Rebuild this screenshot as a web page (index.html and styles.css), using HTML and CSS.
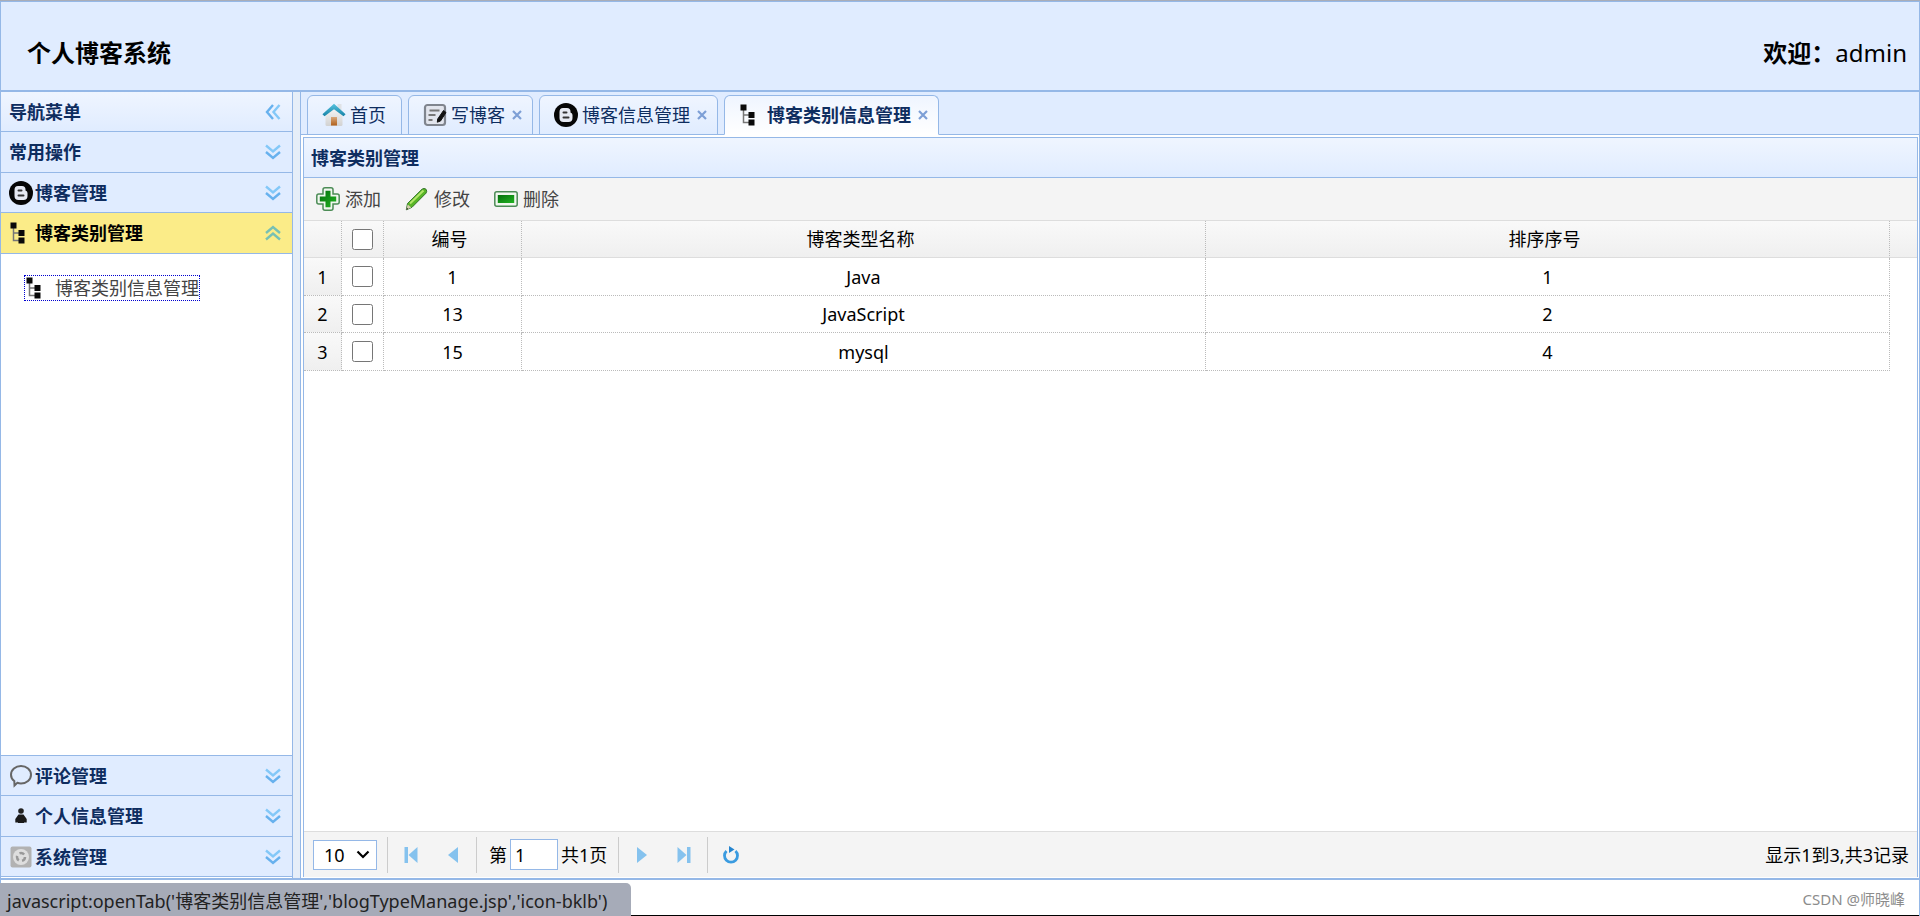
FILE: index.html
```html
<!DOCTYPE html>
<html lang="zh-CN">
<head>
<meta charset="utf-8">
<title>个人博客系统</title>
<link rel="stylesheet" href="styles.css">
</head>
<body>
<svg class="defs" aria-hidden="true">
  <defs>
    <linearGradient id="green" x1="0" y1="0" x2="1" y2="1"><stop offset="0" stop-color="#046f0c"/><stop offset="1" stop-color="#22b422"/></linearGradient>
    <linearGradient id="wall" x1="0" y1="0" x2="0" y2="1"><stop offset="0" stop-color="#f6f6f6"/><stop offset="1" stop-color="#d2d2d2"/></linearGradient>
    <linearGradient id="door" x1="0" y1="0" x2="0" y2="1"><stop offset="0" stop-color="#d9a87c"/><stop offset="1" stop-color="#b0601c"/></linearGradient>
    <linearGradient id="roof" x1="0" y1="0" x2="0" y2="1"><stop offset="0" stop-color="#57c2de"/><stop offset="1" stop-color="#1683a8"/></linearGradient>
    <symbol id="i-tree" viewBox="0 0 24 24"><path d="M4.500 5v14.500H10M4.500 12H10" fill="none" stroke="#777" stroke-width="1.500"/><path d="M1.500 1.500h6v6h-6zM9.500 9h6v6h-6zM9.500 16.500h6v6h-6z" fill="#0a0a0a"/></symbol>
    <symbol id="i-blog" viewBox="0 0 24 24"><circle cx="12" cy="12" r="12" fill="#060606"/><path d="M9 5h4q3.500 0 3.500 3.500v1q2 .5 2 2.500v3q0 4-4 4h-5q-4 0-4-4V9q0-4 3.500-4z" fill="#e6e9f2"/><path d="M9.500 9.500h3M9.500 14.500h5" stroke="#333" stroke-width="2" stroke-linecap="round"/></symbol>
    <symbol id="i-chat" viewBox="0 0 24 24"><path d="M12 2c5.500 0 10 3.800 10 8.700s-4.500 8.700-10 8.700c-1.400 0-2.600-.2-3.700-.6L5.500 21.500l-.2-4.500C3.200 15.500 2 13.200 2 10.700 2 5.800 6.500 2 12 2z" fill="none" stroke="#666" stroke-width="2"/></symbol>
    <symbol id="i-person" viewBox="0 0 24 24"><circle cx="12" cy="7" r="2.800" fill="#222"/><path d="M9.500 10.500h5l3.200 4.500v3.500H15v.5H9v-.5H6.300V15z" fill="#1a1a1a"/></symbol>
    <symbol id="i-gear" viewBox="0 0 24 24"><rect x="1.500" y="1.500" width="21" height="21" rx="2" fill="#b2b2b2"/><circle cx="12" cy="12" r="8" fill="#dedede"/><circle cx="12" cy="12" r="4" fill="none" stroke="#999" stroke-width="2.500" stroke-dasharray="5 3.400"/></symbol>
    <symbol id="i-write" viewBox="0 0 24 24"><rect x="2" y="2" width="20" height="20" rx="2.500" fill="#e2e5ed" stroke="#80858e" stroke-width="2.200"/><path d="M6.500 7.500h10M5.500 12h7M5.500 17h4" stroke="#777" stroke-width="1.800"/><path d="M20.500 7.500l2.500 2-5.500 8.500-3.200 1.200.4-3.200z" fill="#111" stroke="#111"/></symbol>
    <symbol id="i-home" viewBox="0 0 24 24"><path d="M15.500 1h4v7l-4-3z" fill="#dfe2e6"/><path d="M3.500 12L12 5l8.500 7v9.500q0 1.500-1.500 1.500H5q-1.500 0-1.500-1.500z" fill="url(#wall)"/><path d="M9 14h6v8.500H9z" fill="url(#door)"/><path d="M12 .8L23.600 11.300 21.500 13.200 12 6.200 2.500 13.200.4 11.300z" fill="url(#roof)"/></symbol>
    <symbol id="i-add" viewBox="0 0 24 24"><path d="M9 .8h6q2 0 2 2V7h4.200q2 0 2 2v6q0 2-2 2H17v4.200q0 2-2 2H9q-2 0-2-2V17H2.800q-2 0-2-2V9q0-2 2-2H7V2.800q0-2 2-2z" fill="#f1f7ef" stroke="#4c8c56" stroke-width="1.500"/><path d="M9.500 3.800h5v5.700h5.700v5h-5.700v5.700h-5v-5.700H3.800v-5h5.700z" fill="url(#green)"/></symbol>
    <symbol id="i-edit" viewBox="0 0 24 24"><path d="M2.500 16.500L17 2.200q2-1.500 4 0 1.500 2 0 4L7 20.300 1.300 22.800z" fill="#58b526" stroke="#35762c" stroke-width="1"/><path d="M5 16.500L18.500 3.500" stroke="#b2e66a" stroke-width="2"/><path d="M2.700 17.500l3.600 3-5 2.300z" fill="#d6ccb0"/><path d="M1.300 22.800l.8-2 1.200 1.200z" fill="#222"/></symbol>
    <symbol id="i-remove" viewBox="0 0 24 24"><rect x=".8" y="4.800" width="22.400" height="14.400" rx="2" fill="#f1f7ef" stroke="#4c8c56" stroke-width="1.500"/><rect x="3.800" y="8" width="16.400" height="8" fill="url(#green)"/></symbol>
    <symbol id="i-down" viewBox="0 0 16 16"><path d="M1 1.500l7 6 7-6" fill="none" stroke="#83c8f8" stroke-width="2.400"/><path d="M1 8l7 6 7-6" fill="none" stroke="#67b1ee" stroke-width="2.400"/></symbol>
    <symbol id="i-up" viewBox="0 0 16 16"><path d="M1 8l7-6 7 6M1 14.500l7-6 7 6" fill="none" stroke="#77c0b4" stroke-width="2.400"/></symbol>
    <symbol id="i-left" viewBox="0 0 16 16"><path d="M8 1L2 8l6 7" fill="none" stroke="#67b1ee" stroke-width="2.400"/><path d="M14.500 1l-6 7 6 7" fill="none" stroke="#83c8f8" stroke-width="2.400"/></symbol>
    <symbol id="i-x" viewBox="0 0 10 10"><path d="M1 1l8 8M9 1L1 9" stroke="#7d9fd6" stroke-width="2.200"/></symbol>
    <symbol id="i-first" viewBox="0 0 16 16"><path d="M1.500 0H5v16H1.500zM14.500 0v16L5.500 8z" fill="#85c2ee"/></symbol>
    <symbol id="i-prev" viewBox="0 0 16 16"><path d="M13 0v16L3 8z" fill="#85c2ee"/></symbol>
    <symbol id="i-next" viewBox="0 0 16 16"><path d="M3 0v16l10-8z" fill="#85c2ee"/></symbol>
    <symbol id="i-last" viewBox="0 0 16 16"><path d="M14.500 0H11v16h3.500zM1.500 0v16l9-8z" fill="#85c2ee"/></symbol>
    <symbol id="i-reload" viewBox="0 0 16 18"><path d="M3.500 5A6.500 6.500 0 1 0 12.500 5" fill="none" stroke="#3a9be0" stroke-width="2.800"/><path d="M6 0l5.500 3.500L6 7z" fill="#2585cf"/></symbol>
    <symbol id="i-caret" viewBox="0 0 14 9"><path d="M1.500 1.500l5.500 5.500 5.500-5.500" fill="none" stroke="#000" stroke-width="2.200"/></symbol>
  </defs>
</svg>

<header class="banner">
  <h1 class="banner-title">个人博客系统</h1>
  <p class="banner-user"><strong>欢迎：</strong>admin</p>
</header>

<div class="workspace">
  <nav class="sidebar" aria-label="导航菜单">
    <div class="nav-title"><span>导航菜单</span><button class="tool" aria-label="收起"><svg><use href="#i-left"/></svg></button></div>
    <button class="nav-item"><span class="nav-label">常用操作</span><svg class="chev"><use href="#i-down"/></svg></button>
    <button class="nav-item"><svg class="icon"><use href="#i-blog"/></svg><span class="nav-label">博客管理</span><svg class="chev"><use href="#i-down"/></svg></button>
    <button class="nav-item selected"><svg class="icon"><use href="#i-tree"/></svg><span class="nav-label">博客类别管理</span><svg class="chev"><use href="#i-up"/></svg></button>
    <div class="nav-body"><a class="nav-link" href="#"><svg class="icon"><use href="#i-tree"/></svg>博客类别信息管理</a></div>
    <button class="nav-item"><svg class="icon"><use href="#i-chat"/></svg><span class="nav-label">评论管理</span><svg class="chev"><use href="#i-down"/></svg></button>
    <button class="nav-item"><svg class="icon"><use href="#i-person"/></svg><span class="nav-label">个人信息管理</span><svg class="chev"><use href="#i-down"/></svg></button>
    <button class="nav-item"><svg class="icon"><use href="#i-gear"/></svg><span class="nav-label">系统管理</span><svg class="chev"><use href="#i-down"/></svg></button>
  </nav>

  <main class="center">
    <div class="tabs">
      <div class="tab"><svg class="icon"><use href="#i-home"/></svg><span>首页</span></div>
      <div class="tab closable"><svg class="icon"><use href="#i-write"/></svg><span>写博客</span><button class="close" aria-label="关闭"><svg><use href="#i-x"/></svg></button></div>
      <div class="tab closable"><svg class="icon"><use href="#i-blog"/></svg><span>博客信息管理</span><button class="close" aria-label="关闭"><svg><use href="#i-x"/></svg></button></div>
      <div class="tab closable active"><svg class="icon"><use href="#i-tree"/></svg><span>博客类别信息管理</span><button class="close" aria-label="关闭"><svg><use href="#i-x"/></svg></button></div>
    </div>
    <section class="panel">
      <h2 class="panel-title">博客类别管理</h2>
      <div class="toolbar">
        <button class="action"><svg class="icon"><use href="#i-add"/></svg>添加</button>
        <button class="action"><svg class="icon"><use href="#i-edit"/></svg>修改</button>
        <button class="action"><svg class="icon"><use href="#i-remove"/></svg>删除</button>
      </div>
      <div class="grid-wrap">
        <table class="grid">
          <colgroup><col class="c-row"><col class="c-check"><col class="c-id"><col><col><col class="c-gap"></colgroup>
          <thead>
            <tr><th></th><th><input type="checkbox" aria-label="全选"></th><th class="sortable">编号</th><th class="sortable">博客类型名称</th><th class="sortable">排序序号</th><th></th></tr>
          </thead>
          <tbody>
            <tr><td class="num">1</td><td><input type="checkbox" aria-label="选择 1"></td><td>1</td><td>Java</td><td>1</td><td class="gap"></td></tr>
            <tr><td class="num">2</td><td><input type="checkbox" aria-label="选择 2"></td><td>13</td><td>JavaScript</td><td>2</td><td class="gap"></td></tr>
            <tr><td class="num">3</td><td><input type="checkbox" aria-label="选择 3"></td><td>15</td><td>mysql</td><td>4</td><td class="gap"></td></tr>
          </tbody>
        </table>
      </div>
      <div class="pager">
        <span class="page-size"><select aria-label="每页条数"><option>10</option><option>20</option><option>50</option></select><svg class="caret"><use href="#i-caret"/></svg></span>
        <span class="sep"></span>
        <button class="page-btn" aria-label="首页"><svg><use href="#i-first"/></svg></button>
        <button class="page-btn" aria-label="上一页"><svg><use href="#i-prev"/></svg></button>
        <span class="sep"></span>
        <label class="page-label">第<input class="page-num" type="text" value="1">共1页</label>
        <span class="sep"></span>
        <button class="page-btn" aria-label="下一页"><svg><use href="#i-next"/></svg></button>
        <button class="page-btn" aria-label="末页"><svg><use href="#i-last"/></svg></button>
        <span class="sep"></span>
        <button class="page-btn" aria-label="刷新"><svg class="reload"><use href="#i-reload"/></svg></button>
        <span class="page-info">显示1到3,共3记录</span>
      </div>
    </section>
  </main>
</div>

<footer class="footer">CSDN @师晓峰</footer>
<div class="status">javascript:openTab('博客类别信息管理','blogTypeManage.jsp','icon-bklb')</div>
</body>
</html>
```
FILE: styles.css
```css
* { box-sizing: border-box; }

body {
  margin: 0;
  height: 100vh;
  display: flex;
  flex-direction: column;
  position: relative;
  border-top: 1px solid #a9adb8;
  background: #fff;
  color: #000;
  font: 18px/26px "Noto Sans", "Noto Sans CJK SC", sans-serif;
}

button, input, select { font: inherit; color: inherit; }
button { margin: 0; padding: 0; border: 0; background: none; text-align: left; }
.defs { position: absolute; width: 0; height: 0; }
.icon { width: 24px; height: 24px; flex: none; }

.banner {
  flex: none;
  display: flex;
  align-items: center;
  justify-content: space-between;
  height: 91px;
  padding: 14px 12px 0 26px;
  border: 1px solid #95b8e7;
  border-bottom-width: 2px;
  background: #e0ecff;
}
.banner-title, .banner-user { margin: 0; font-size: 24px; line-height: 36px; }
.banner-title { font-weight: 700; }

.workspace { flex: 1; min-height: 0; display: flex; background: #e6eef8; border-bottom: 2px solid #95b8e7; }

.sidebar {
  width: 293px;
  margin-right: 7px;
  flex: none;
  display: flex;
  flex-direction: column;
  border: 1px solid #95b8e7;
  border-width: 0 1px;
  padding-bottom: 1px;
  background: #fff;
  color: #0e2d5f;
}
.nav-title, .nav-item {
  flex: none;
  display: flex;
  align-items: center;
  gap: 2px;
  height: 40px;
  padding: 0 11px 0 8px;
  border-bottom: 1px solid #95b8e7;
  background: #e0ecff;
  font-weight: 700;
}
.nav-title { justify-content: space-between; background: linear-gradient(#eff5ff, #e0ecff); }
.nav-item:nth-of-type(odd) { height: 41px; }
.nav-label { flex: 1; }
.nav-item.selected { background: #fbec88; color: #000; }
.chev, .tool svg { display: block; width: 16px; height: 16px; flex: none; }
.nav-body { flex: 1; padding: 22px 24px; border-bottom: 1px solid #95b8e7; }
.nav-link {
  display: inline-flex;
  align-items: center;
  gap: 6px;
  height: 24px;
  color: #444;
  text-decoration: none;
  outline: 1px dotted #0000d0;
}

.center {
  flex: 1;
  min-width: 0;
  display: flex;
  flex-direction: column;
  border: 1px solid #95b8e7;
  border-width: 0 1px;
  background: #fff;
}
.tabs {
  flex: none;
  display: flex;
  gap: 6px;
  height: 43px;
  padding: 3px 6px 0;
  border-bottom: 1px solid #95b8e7;
  background: #e0ecff;
  color: #0e2d5f;
}
.tab {
  display: flex;
  align-items: center;
  gap: 4px;
  height: 40px;
  padding: 0 15px 0 14px;
  border: 1px solid #95b8e7;
  border-radius: 6px 6px 0 0;
  background: linear-gradient(#eff5ff, #e0ecff);
}
.tab.closable { padding-right: 10px; }
.tab.active { border-bottom-color: #fff; background: linear-gradient(#eff5ff, #fff); font-weight: 700; }
.close { margin-left: 3px; }
.close svg { display: block; width: 10px; height: 10px; }

.panel {
  flex: 1;
  min-height: 0;
  display: flex;
  flex-direction: column;
  margin: 2px 1px 1px 2px;
  border: 1px solid #95b8e7;
  border-bottom: 0;
}
.panel-title {
  margin: 0;
  padding: 7px;
  height: 40px;
  border-bottom: 1px solid #95b8e7;
  background: linear-gradient(#eff5ff, #e0ecff);
  color: #0e2d5f;
  font-size: 18px;
  font-weight: 700;
}
.toolbar { display: flex; gap: 24px; height: 43px; padding: 0 12px; border-bottom: 1px solid #ddd; background: #f4f4f4; }
.action { display: flex; align-items: center; gap: 5px; color: #444; }

.grid-wrap { flex: 1; min-height: 0; }
.grid { width: 100%; table-layout: fixed; border-collapse: separate; border-spacing: 0; }
.c-row { width: 38px; }
.c-check { width: 42px; }
.c-id { width: 138px; }
.c-gap { width: 27px; }
.grid th, .grid td { height: 37px; padding: 0; text-align: center; vertical-align: middle; font-weight: 400; border-right: 1px dotted #bbb; border-bottom: 1px dotted #bbb; }
.grid tbody tr:nth-child(odd) td { height: 38px; }
.grid thead tr { background: linear-gradient(#f9f9f9, #efefef); }
.grid th { border-bottom: 1px solid #ddd; }
.grid th.sortable { padding-right: 6px; }
.grid th:last-child, .grid .gap { border-right: 0; }
.grid tbody .gap { border-bottom: 0; }
.grid .num { background: linear-gradient(#f9f9f9, #efefef); }
.grid input { display: block; width: 21px; height: 21px; margin: 0 auto; }

.pager { flex: none; display: flex; align-items: center; height: 46px; padding: 0 8px 0 9px; border-top: 1px solid #ddd; background: #f4f4f4; }
.page-size { position: relative; width: 64px; height: 30px; margin-right: 8px; }
.page-size select { display: block; appearance: none; width: 100%; height: 100%; padding: 0 10px; border: 1px solid #95b8e7; border-radius: 0; background: #fff; }
.caret { position: absolute; right: 7px; top: 10px; width: 14px; height: 9px; pointer-events: none; }
.sep { width: 1px; height: 36px; margin: 0 2px; background: #ccc; }
.page-btn { display: flex; align-items: center; justify-content: center; width: 42px; height: 36px; }
.page-btn svg { width: 16px; height: 16px; }
.page-btn .reload { height: 18px; }
.page-label { display: flex; align-items: center; gap: 3px; padding: 0 9px 0 10px; }
.page-num { width: 48px; height: 31px; padding: 0 4px; border: 1px solid #95b8e7; background: #fff; }
.page-info { margin-left: auto; }

.footer {
  flex: none;
  height: 36px;
  padding: 6px 14px 0;
  border: 1px solid #95b8e7;
  border-width: 0 1px;
  box-shadow: inset 0 -1px #000;
  color: #8c8c8c;
  font-size: 15px;
  text-align: right;
}
.status {
  position: absolute;
  left: 0;
  bottom: 0;
  height: 33px;
  padding: 5px 24px 0 7px;
  border-radius: 0 5px 0 0;
  background: #a6abb8;
  color: #222;
}
```
